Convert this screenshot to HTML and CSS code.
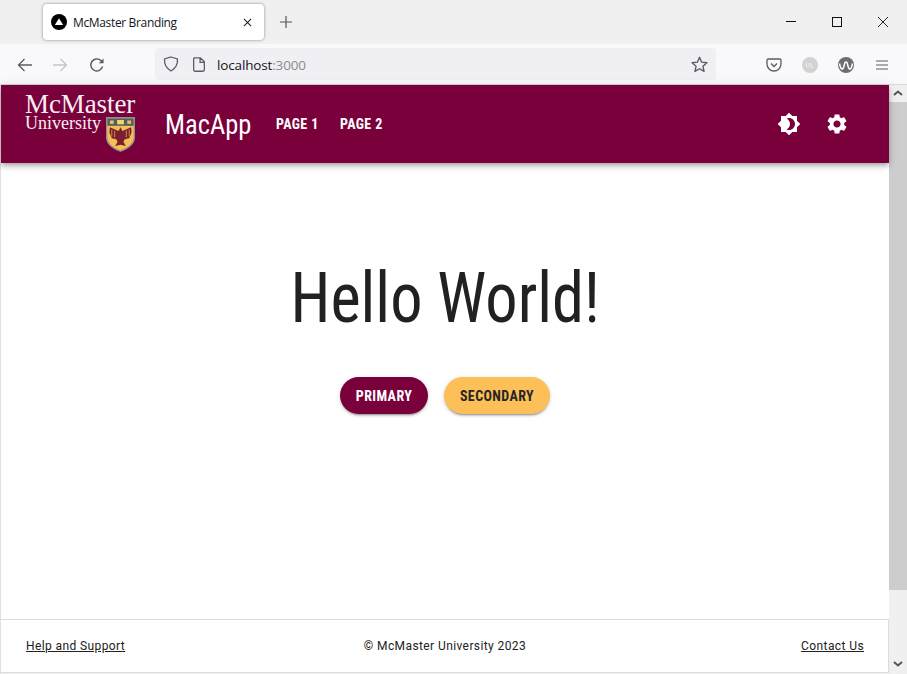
FILE: index.html
```html
<!DOCTYPE html>
<html lang="en">
<head>
<meta charset="utf-8">
<title>McMaster Branding</title>
<link rel="stylesheet" href="styles.css">
</head>
<body>
<div class="window">
  <div class="tabstrip">
    <div class="tab">
      <svg class="favicon" viewBox="0 0 16 16"><circle cx="8" cy="8" r="8" fill="#000"/><path d="M8 4.200 12.200 11H3.800Z" fill="#fff"/></svg>
      <span class="tab-title">McMaster Branding</span>
      <svg class="tab-close" viewBox="0 0 10 10"><path d="M1 1 9 9M9 1 1 9" stroke="#222" stroke-width="1.200" fill="none"/></svg>
    </div>
    <svg class="newtab" viewBox="0 0 12 12"><path d="M6 0V12M0 6H12" stroke="#555" stroke-width="1.200" fill="none"/></svg>
    <div class="winctrls">
      <svg class="winbtn" viewBox="0 0 10 10"><path d="M0 4.500H10" stroke="#111" fill="none"/></svg>
      <svg class="winbtn" viewBox="0 0 10 10"><rect x=".5" y=".5" width="9" height="9" stroke="#111" fill="none"/></svg>
      <svg class="winbtn" viewBox="0 0 10 10"><path d="M0 0 10 10M10 0 0 10" stroke="#111" stroke-width=".9" fill="none"/></svg>
    </div>
  </div>
  <div class="toolbar">
    <svg class="navicon back" viewBox="0 0 16 16"><path d="M15 8H1.500M7.500 2 1.500 8l6 6" stroke="#5b5b66" stroke-width="1.300" fill="none"/></svg>
    <svg class="navicon fwd" viewBox="0 0 16 16"><path d="M1 8h13.500M8.500 2l6 6-6 6" stroke="#c4c4ca" stroke-width="1.300" fill="none"/></svg>
    <svg class="navicon reload" viewBox="0 0 16 16"><path d="M13.600 9.500A6 6 0 1 1 12 3.600L14 5.600" stroke="#5b5b66" stroke-width="1.400" fill="none"/><path d="M14.500 1.500V6.200H9.800Z" fill="#5b5b66"/></svg>
    <div class="urlbar">
      <svg class="shield" viewBox="0 0 16 16"><path d="M8 1 14.500 3c.3 5.500-2 9.500-6.500 12C3.500 12.500 1.200 8.500 1.500 3Z" stroke="#5b5b66" stroke-width="1.300" fill="none"/></svg>
      <svg class="page" viewBox="0 0 12 14"><path d="M1.700.8H7.300L11 4.500V12a1.300 1.300 0 0 1-1.300 1.300H2.300A1.300 1.300 0 0 1 1 12V1.500ZM7 1V5H11" stroke="#5b5b66" stroke-width="1.200" fill="none"/></svg>
      <span class="url"><span class="host">localhost</span><span class="port">:3000</span></span>
      <svg class="star" viewBox="0 0 16 16"><path d="M8 1.200 10 5.800l5 .5-3.800 3.300 1.100 4.900L8 12l-4.300 2.500 1.100-4.900L1 6.300l5-.5Z" stroke="#5b5b66" stroke-width="1.300" stroke-linejoin="round" fill="none"/></svg>
    </div>
    <svg class="tool pocket" viewBox="0 0 16 16"><path d="M2.500 2h11A1.500 1.500 0 0 1 15 3.500V7a7 7 0 0 1-14 0V3.500A1.500 1.500 0 0 1 2.500 2Z" stroke="#5b5b66" stroke-width="1.300" fill="none"/><path d="M5 6.500 8 9.500l3-3" stroke="#5b5b66" stroke-width="1.400" fill="none"/></svg>
    <svg class="tool ext" viewBox="0 0 16 16"><circle cx="8" cy="8" r="8" fill="#d2d2d2"/><path d="M4.500 6v3a1.300 1.300 0 0 0 2.600 0V6M9 6v4.300h2.500" stroke="#eee" stroke-width="1" fill="none"/></svg>
    <svg class="tool ext2" viewBox="0 0 16 16"><circle cx="8" cy="8" r="8" fill="#6e6e6e"/><path d="M1.500 6.500C3 14 5 13 6 9c.7-3 .7-4 2-4s1.300 1 2 4c1 4 3 5 4.500-2.500" stroke="#fff" stroke-width="1.500" fill="none"/></svg>
    <svg class="tool menu" viewBox="0 0 12 10"><path d="M0 1H12M0 5H12M0 9H12" stroke="#5b5b66" stroke-width="1.200" fill="none"/></svg>
  </div>
  <div class="viewport">
    <div class="page-area">
      <header class="appbar">
        <div class="logo">
          <div class="logo-text">
            <span class="logo-mc">McMaster</span>
            <span class="logo-uni">University</span>
          </div>
          <svg class="crest" viewBox="0 0 30 36">
            <path d="M.7.700H29.300V21C29.300 28 22 32.500 15 35.300 8 32.500.7 28 .7 21Z" fill="#f6bd55" stroke="#8f8f8f" stroke-width="1.400"/>
            <rect x="1.400" y="1.400" width="27.200" height="7.600" fill="#4f5f63"/>
            <rect x="4" y="3.500" width="4" height="3.500" fill="#e8c060"/>
            <rect x="11.500" y="3" width="7" height="4.500" fill="#f5d070"/>
            <rect x="22" y="3.500" width="4" height="3.500" fill="#e8c060"/>
            <path d="M15 10.500 17 14.500 26 10.500 26.500 16 24 22 19.500 23 18 25.500 20.500 30 15 28.500 9.500 30 12 25.500 10.500 23 6 22 3.500 16 4 10.500 13 14.500Z" fill="#7a1f2f"/>
            <path d="M6 13V20M9 14V21M24 13V20M21 14V21" stroke="#f6bd55" stroke-width=".7" fill="none"/>
          </svg>
        </div>
        <span class="brand">MacApp</span>
        <nav class="nav">
          <a class="nav-link">PAGE 1</a>
          <a class="nav-link">PAGE 2</a>
        </nav>
        <div class="actions">
          <svg class="action" viewBox="0 0 24 24"><path fill="#fff" d="M20 8.690V4h-4.690L12 .69 8.690 4H4v4.690L.69 12 4 15.310V20h4.690L12 23.310 15.310 20H20v-4.690L23.310 12 20 8.690zM12 18c-.89 0-1.740-.2-2.500-.55C11.560 16.500 13 14.420 13 12s-1.440-4.500-3.500-5.450C10.260 6.200 11.110 6 12 6c3.310 0 6 2.690 6 6s-2.690 6-6 6z"/></svg>
          <svg class="action" viewBox="0 0 24 24"><path fill="#fff" d="M19.140 12.940c.04-.3.060-.61.060-.94 0-.32-.02-.64-.07-.94l2.030-1.580c.18-.14.23-.41.120-.61l-1.920-3.320c-.12-.22-.37-.29-.59-.22l-2.390.96c-.5-.38-1.030-.7-1.620-.94l-.36-2.540c-.04-.24-.24-.41-.48-.41h-3.840c-.24 0-.43.170-.47.410l-.36 2.540c-.59.240-1.130.570-1.620.94l-2.390-.96c-.22-.08-.47 0-.59.220L2.740 8.870c-.12.210-.08.470.12.610l2.030 1.580c-.05.300-.09.630-.09.940s.02.640.07.940l-2.030 1.580c-.18.140-.23.410-.12.610l1.920 3.320c.12.220.37.290.59.220l2.390-.96c.5.380 1.030.700 1.620.94l.36 2.540c.05.240.24.410.48.410h3.840c.24 0 .44-.17.470-.41l.36-2.540c.59-.24 1.130-.56 1.620-.94l2.390.96c.22.080.47 0 .59-.22l1.920-3.320c.12-.22.070-.47-.12-.61l-2.010-1.580zM12 15.600c-1.980 0-3.600-1.620-3.600-3.600s1.620-3.600 3.600-3.600 3.600 1.620 3.600 3.600-1.620 3.600-3.600 3.600z"/></svg>
        </div>
      </header>
      <main class="main">
        <h1 class="hello">Hello World!</h1>
        <div class="buttons">
          <button class="btn primary">PRIMARY</button>
          <button class="btn secondary">SECONDARY</button>
        </div>
      </main>
      <footer class="footer">
        <a class="foot-link">Help and Support</a>
        <span class="copy">© McMaster University 2023</span>
        <a class="foot-link foot-right">Contact Us</a>
      </footer>
    </div>
    <div class="scrollbar">
      <svg class="arrow arrow-up" viewBox="0 0 10 6"><path d="M1 5 5 1.500 9 5" stroke="#555" stroke-width="2" fill="none"/></svg>
      <div class="thumb"></div>
      <svg class="arrow arrow-down" viewBox="0 0 10 6"><path d="M1 1 5 4.500 9 1" stroke="#555" stroke-width="2" fill="none"/></svg>
    </div>
  </div>
</div>
</body>
</html>
```
FILE: styles.css
```css
* { box-sizing: border-box; }
html, body { margin: 0; padding: 0; height: 100%; overflow: hidden; }
body { font-family: Roboto, "Liberation Sans", sans-serif; }
.window { width: 907px; height: 674px; display: flex; flex-direction: column; background: #f0f0f0; }
.tabstrip { height: 44px; display: flex; align-items: center; background: #f0f0f0; padding-left: 43px; }
.tab { width: 221px; height: 36px; background: #fff; border-radius: 4px; box-shadow: 0 0 3px rgba(0,0,0,.45); display: flex; align-items: center; padding-left: 8px; }
.favicon { width: 16px; height: 16px; }
.tab-title { margin-left: 6px; font: 12px "Open Sans", Roboto, sans-serif; letter-spacing: -.35px; color: #15141a; flex: 1; }
.tab-close { width: 9px; height: 9px; margin-right: 12px; }
.newtab { width: 12px; height: 12px; margin-left: 16px; }
.winctrls { margin-left: auto; display: flex; align-items: center; gap: 36px; padding-right: 19px; }
.winbtn { width: 10px; height: 10px; }
.toolbar { height: 41px; background: #f9f9fb; border-bottom: 1px solid #d8d8d8; display: flex; align-items: center; padding-left: 17px; }
.navicon { width: 16px; height: 16px; margin-top: 2px; flex: none; }
.fwd { margin-left: 19px; }
.reload { margin-left: 21px; }
.urlbar { width: 561px; height: 32px; margin-left: 50px; background: #f0f0f4; border-radius: 4px; display: flex; align-items: center; padding-left: 8px; flex: none; }
.shield { width: 16px; height: 16px; }
.page { width: 14px; height: 15px; margin-left: 13px; }
.url { margin-left: 11px; margin-top: 2px; font: 13.500px "Open Sans", Roboto, sans-serif; letter-spacing: -.15px; }
.host { color: #15141a; }
.port { color: #8a8a90; }
.star { width: 17px; height: 17px; margin-left: auto; margin-right: 8px; }
.tool { width: 16px; height: 16px; flex: none; margin-top: 1px; }
.pocket { margin-left: 50px; }
.ext { margin-left: 20px; }
.ext2 { margin-left: 20px; }
.menu { width: 12px; height: 10px; margin-left: 22px; }
.viewport { flex: 1; display: flex; min-height: 0; }
.page-area { flex: 1; display: flex; flex-direction: column; border-left: 1px solid #e0e0e0; min-width: 0; }
.appbar { height: 78px; flex: none; background: #7a003c; display: flex; align-items: center; box-shadow: 0 2px 4px -1px rgba(0,0,0,.2), 0 4px 5px rgba(0,0,0,.14), 0 1px 10px rgba(0,0,0,.12); position: relative; padding-left: 24px; }
.logo { width: 111px; height: 60px; position: relative; flex: none; }
.logo-text { display: flex; flex-direction: column; color: #f5eef1; font-family: "Liberation Serif", serif; }
.logo-mc { font-size: 27px; line-height: 20px; letter-spacing: -.1px; }
.logo-uni { font-size: 18px; line-height: 18px; }
.crest { position: absolute; left: 81px; top: 23px; width: 29px; height: 35px; }
.brand { margin-left: 29px; font-size: 28px; font-stretch: 75%; color: #fff; transform: scaleX(.945); transform-origin: left center; width: 95px; }
.nav { display: flex; gap: 21px; margin-left: 16px; }
.nav-link { color: #fff; font-weight: 700; font-size: 14px; font-stretch: 75%; letter-spacing: .4px; width: 43px; white-space: nowrap; }
.actions { margin-left: auto; display: flex; gap: 24px; padding-right: 40px; }
.action { width: 24px; height: 24px; }
.main { flex: 1; display: flex; flex-direction: column; align-items: center; padding-top: 87px; background: #fff; }
.hello { margin: 0; font-weight: 400; font-size: 70px; font-stretch: 75%; line-height: 96px; color: #212121; transform: scaleX(.92); white-space: nowrap; }
.buttons { display: flex; gap: 16px; margin-top: 31px; }
.btn { height: 37px; border: 0; border-radius: 19px; padding: 0; font: 700 14px Roboto, sans-serif; font-stretch: 75%; letter-spacing: .4px; box-shadow: 0 3px 1px -2px rgba(0,0,0,.2), 0 2px 2px rgba(0,0,0,.14), 0 1px 5px rgba(0,0,0,.12); }
.primary { background: #7a003c; color: #fff; width: 88px; }
.secondary { background: #fdbf57; color: #262626; width: 106px; }
.footer { height: 54px; flex: none; margin-bottom: 1px; background: #fff; display: grid; grid-template-columns: 1fr auto 1fr; align-items: center; padding: 0 24px 0 25px; border-top: 1px solid #dcdcdc; border-right: 1px solid #dcdcdc; border-bottom: 1px solid #dcdcdc; font-size: 12px; letter-spacing: .4px; color: #212121; }
.foot-link { text-decoration: underline; }
.foot-right { justify-self: end; }
.scrollbar { width: 18px; display: flex; flex-direction: column; background: #f0f0f0; align-items: center; }
.arrow { width: 10px; height: 6px; flex: none; }
.arrow-up { margin: 5px 0 6px; }
.arrow-down { margin: 4px 0 7px; }
.thumb { flex: 1; width: 100%; background: #cdcdcd; margin-bottom: 67px; }
```
